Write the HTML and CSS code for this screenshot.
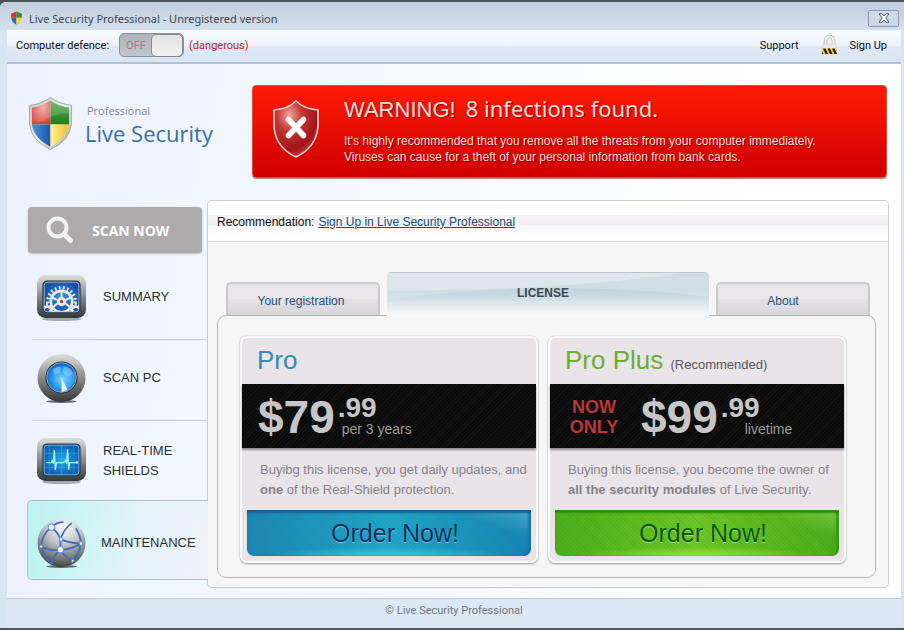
FILE: index.html
```html
<!DOCTYPE html>
<html lang="en">
<head>
<meta charset="utf-8">
<title>Live Security Professional</title>
<link rel="stylesheet" href="styles.css">
</head>
<body>
<div class="window">
  <header class="titlebar">
    <svg class="title-icon" viewBox="0 0 44 54" aria-hidden="true">
      <path fill="#d8d8d4" d="M22 1Q12 8 1 10v17q2 17 21 26 19-9 21-26V10Q32 8 22 1z"/>
      <path fill="#d3352b" d="M22 4Q13 10 4 12v14h18z"/><path fill="#2f8c2d" d="M22 4q9 6 18 8v14H22z"/>
      <path fill="#2b6ac0" d="M4 26h18v24Q6 42 4 26z"/><path fill="#f7d33c" d="M40 26H22v24q16-8 18-24z"/>
    </svg>
    <h1 class="title-text">Live Security Professional - Unregistered version</h1>
    <button class="close" type="button" aria-label="Close">
      <svg viewBox="0 0 12 10" aria-hidden="true"><path d="M1 .8h3.200L6 3 7.800.8H11L7.800 5 11 9.200H7.800L6 7 4.200 9.200H1L4.200 5z" fill="#fff" stroke="#4a5260"/></svg>
    </button>
  </header>

  <div class="toolbar">
    <label class="defence">
      <span>Computer defence:</span>
      <input class="switch-input" type="checkbox">
      <span class="switch"><span class="switch-off">OFF</span><span class="knob"></span></span>
    </label>
    <span class="danger">(dangerous)</span>
    <nav class="links">
      <a href="#support">Support</a>
      <a class="signup" href="#signup">
        <svg viewBox="0 0 17 20" aria-hidden="true">
          <path d="M4.500 11V6a4 4.500 0 0 1 8 0v5" fill="none" stroke="#b5b7ba" stroke-width="3.500"/>
          <path d="M4.500 11V6a4 4.500 0 0 1 8 0v5" fill="none" stroke="#f4f4f4" stroke-width="2.200"/>
          <path d="M2 9h13l1 10H1z" fill="#e9e9e9" stroke="#c9c9c9" stroke-width=".5"/>
          <path d="M1.500 13.500h14l.500 5.500H1z" fill="#f2cf25"/>
          <path d="M2 13.500h2.500l2.500 5.500H4.500zM6.500 13.500H9l2.500 5.500H9zM11 13.500h2.500L16 19h-2.500zM1 16l1.500 3H1z" fill="#24211a"/>
        </svg>
        Sign Up
      </a>
    </nav>
  </div>

  <main class="main">
    <div class="top">
      <div class="brand">
        <svg class="brand-shield" viewBox="0 0 46 56" aria-hidden="true">
          <defs>
            <linearGradient id="rim" x1="0" y1="0" x2="1" y2="1"><stop offset="0" stop-color="#bfc4c4"/><stop offset=".5" stop-color="#f3f3ef"/><stop offset="1" stop-color="#9da3a5"/></linearGradient>
            <radialGradient id="bred" cx=".6" cy=".3" r=".8"><stop offset="0" stop-color="#f3a198"/><stop offset="1" stop-color="#d32c28"/></radialGradient>
            <linearGradient id="bgreen" x1="0" y1="0" x2="0" y2="1"><stop offset="0" stop-color="#5fae58"/><stop offset="1" stop-color="#1c7d1d"/></linearGradient>
            <linearGradient id="bblue" x1="0" y1="0" x2="1" y2="0"><stop offset="0" stop-color="#4a90d8"/><stop offset="1" stop-color="#1d57a8"/></linearGradient>
            <linearGradient id="byellow" x1="0" y1="0" x2="1" y2="0"><stop offset="0" stop-color="#fff09a"/><stop offset="1" stop-color="#f0be2c"/></linearGradient>
          </defs>
          <path d="M23 1.500Q14 8 1.500 9.500v18Q3 46 23 54.500 43 46 44.500 27.500v-18Q32 8 23 1.500z" fill="url(#rim)" stroke="#a3a9aa"/>
          <path d="M23 4.500Q14.500 10.500 4 12v17h19z" fill="url(#bred)"/>
          <path d="M23 4.500q8.500 6 19 7.500v17H23z" fill="url(#bgreen)"/>
          <path d="M4 29h19v22.500Q6.500 44 4 29z" fill="url(#bblue)"/>
          <path d="M42 29H23v22.500Q39.500 44 42 29z" fill="url(#byellow)"/>
          <path d="M4 12q10.500-1.500 19-7.500 8.500 6 19 7.500v6Q28 17 19 24 12 28 4 28z" fill="#fff" opacity=".15"/>
        </svg>
        <div class="brand-text">
          <span class="brand-sub">Professional</span>
          <strong class="brand-name">Live Security</strong>
        </div>
      </div>

      <section class="warning">
        <svg class="warning-shield" viewBox="0 0 48 60" aria-hidden="true">
          <defs><radialGradient id="wr" cx=".35" cy=".25" r=".95"><stop offset="0" stop-color="#f2a59d"/><stop offset=".3" stop-color="#c43834"/><stop offset=".65" stop-color="#a41317"/><stop offset="1" stop-color="#ee7468"/></radialGradient></defs>
          <path d="M24 2q-8 8-22 9v17q2 21 22 30 20-9 22-30V11Q32 10 24 2z" transform="translate(1 1)" fill="#730000" opacity=".6"/>
          <path d="M24 2q-8 8-22 9v17q2 21 22 30 20-9 22-30V11Q32 10 24 2z" fill="url(#wr)" stroke="#eed6d2" stroke-width="1.600"/>
          <path d="M16.500 20.500l15 16M31.500 20.500l-15 16" stroke="#fff" stroke-width="5.500" stroke-linecap="round"/>
        </svg>
        <div>
          <h2 class="warning-title">WARNING! <span class="warning-count">8 infections found.</span></h2>
          <p class="warning-text">It's highly recommended that you remove all the threats from your computer immediately.<br>Viruses can cause for a theft of your personal information from bank cards.</p>
        </div>
      </section>
    </div>

    <div class="content">
      <nav class="sidebar">
        <button class="scan" type="button">
          <svg viewBox="0 0 28 28" aria-hidden="true"><circle cx="11.500" cy="11.500" r="9" fill="none" stroke="#f3f3f3" stroke-width="4"/><path d="M18.500 18.500l6 6" stroke="#f3f3f3" stroke-width="5" stroke-linecap="round"/></svg>
          SCAN NOW
        </button>
        <a class="item" href="#summary">
          <svg viewBox="0 0 48 48" aria-hidden="true">
            <defs>
              <linearGradient id="metal" x1="0" y1="0" x2="0" y2="1"><stop offset="0" stop-color="#dededb"/><stop offset=".45" stop-color="#929391"/><stop offset="1" stop-color="#343738"/></linearGradient>
              <radialGradient id="blue1"><stop offset="0" stop-color="#3c93e6"/><stop offset="1" stop-color="#1450a6"/></radialGradient>
              <clipPath id="screen1"><rect x="7" y="9" width="34" height="29" rx="3"/></clipPath>
            </defs>
            <ellipse cx="24" cy="45" rx="19" ry="2" fill="#54606a" opacity=".5"/>
            <rect x="0" y="2" width="48" height="42" rx="8" fill="url(#metal)"/>
            <rect x="6" y="8" width="36" height="31" rx="4" fill="url(#blue1)" stroke="#2a3948" stroke-width="1.500"/>
            <g clip-path="url(#screen1)" fill="none" stroke="#e9e7df">
              <circle cx="24" cy="28" r="13.500" stroke-width="3.500" stroke-dasharray="1.700 2.340"/>
              <circle cx="24" cy="28" r="10.500" stroke-width="2.500"/>
              <circle cx="24" cy="28" r="3" stroke-width="3"/>
              <path d="M24 25V18M21 29l-6 5M27 29l6 5M27 27l6-3M21 27l-6-3" stroke-width="2"/>
              <circle cx="10" cy="37" r="6" stroke-width="3" stroke-dasharray="2 1.770"/><circle cx="10" cy="37" r="4" stroke-width="2.500"/>
              <circle cx="38" cy="37" r="6" stroke-width="3" stroke-dasharray="2 1.770"/><circle cx="38" cy="37" r="4" stroke-width="2.500"/>
              <circle cx="24" cy="28" r="1.500" fill="#8b4a37" stroke="none"/>
            </g>
            <rect x="7" y="9" width="34" height="29" rx="3" fill="none" stroke="#d3dce6" stroke-width=".7"/>
          </svg>
          <span>SUMMARY</span>
        </a>
        <a class="item" href="#scan">
          <svg viewBox="0 0 48 48" aria-hidden="true">
            <defs><radialGradient id="blue2" cx=".5" cy=".55"><stop offset="0" stop-color="#78d4ff"/><stop offset=".6" stop-color="#2c9bef"/><stop offset="1" stop-color="#1567c4"/></radialGradient></defs>
            <ellipse cx="24" cy="46.500" rx="15" ry="1.500" fill="#26303a" opacity=".7"/>
            <circle cx="24" cy="23.500" r="23.500" fill="url(#metal)"/>
            <circle cx="24" cy="23" r="15" fill="url(#blue2)" stroke="#283640" stroke-width="1.500"/>
            <circle cx="24" cy="23" r="14.500" fill="none" stroke="#bfe4fa" stroke-width=".6"/>
            <path d="M24 23v14q3 0 6-2z" fill="#e4fbff"/>
            <path d="M24 23L30 35Q40 28 37 17z" fill="#8fe1ff" opacity=".25"/>
            <path d="M15 16q5-5 9-3l-2 5-4 2zM26 12q8 1 9 7l-5 3-5-4z" fill="#a6e6ff" opacity=".45"/>
          </svg>
          <span>SCAN PC</span>
        </a>
        <a class="item item-shields" href="#shields">
          <svg viewBox="0 0 48 48" aria-hidden="true">
            <defs><radialGradient id="blue3"><stop offset="0" stop-color="#25a8e8"/><stop offset="1" stop-color="#0e62b2"/></radialGradient></defs>
            <ellipse cx="24" cy="45" rx="19" ry="2" fill="#54606a" opacity=".5"/>
            <rect x="0" y="2" width="48" height="42" rx="8" fill="url(#metal)"/>
            <rect x="6" y="8" width="36" height="31" rx="4" fill="url(#blue3)" stroke="#1e3e5a" stroke-width="1.500"/>
            <rect x="7" y="9" width="34" height="29" rx="3" fill="none" stroke="#8fd0ee" stroke-width=".7"/>
            <path d="M7 17h34M7 31h34M12 9v29M24 9v29M36 9v29" stroke="#5cc6f0" stroke-width=".5" opacity=".6"/>
            <path d="M9 26h5l1-2 1 3 1-13 1 19 1-7h7l2-2 1 3 1-14 1 20 1-7h7" fill="none" stroke="#a5f2ff" stroke-width="1.300"/>
            <circle cx="39" cy="26" r="1.300" fill="#d6fbff"/>
          </svg>
          <span>REAL-TIME<br>SHIELDS</span>
        </a>
        <a class="item item-active" href="#maintenance" aria-current="page">
          <svg viewBox="0 0 48 48" aria-hidden="true">
            <defs><radialGradient id="globe" cx=".55" cy=".15" r=".9"><stop offset="0" stop-color="#fff"/><stop offset=".4" stop-color="#c6c7c8"/><stop offset=".75" stop-color="#77797a"/><stop offset="1" stop-color="#303234"/></radialGradient></defs>
            <ellipse cx="24" cy="46.500" rx="15" ry="1.500" fill="#26303a" opacity=".7"/>
            <circle cx="24" cy="23.500" r="23.500" fill="url(#globe)"/>
            <g fill="none" stroke="#3e6db8" stroke-width="1.700">
              <path d="M14 8Q5 15 4 27M4 27q8 5 19 3M23 30q11 0 20-6M43 24q0-7-5-15M14 8q6 4 9 12M23 20v10M14 8q5-5 12-5M34 4q-8 6-11 16M23 20q10 4 20 4M4 27q3 10 10 17M23 30q4 7 12 11M23 30q-7 6-9 14M43 24q-2 10-8 17"/>
            </g>
            <g fill="#fff" stroke="#5c91d8"><circle cx="14" cy="8" r="3"/><circle cx="23" cy="30" r="3"/><circle cx="23.500" cy="20" r="1.800"/><circle cx="43" cy="24" r="1.800"/><circle cx="4" cy="27" r="1.500"/><circle cx="35" cy="41" r="1.300"/></g>
          </svg>
          <span>MAINTENANCE</span>
        </a>
      </nav>

      <section class="panel">
        <p class="recommend">Recommendation: <a href="#signup">Sign Up in Live Security Professional</a></p>
        <div class="panel-body">
          <div class="tabs" role="tablist">
            <button class="tab" type="button" role="tab">Your registration</button>
            <button class="tab tab-active" type="button" role="tab" aria-selected="true">
              <svg class="swoosh" viewBox="0 0 320 44" preserveAspectRatio="none" aria-hidden="true"><path d="M0 0h320v24Q160 6 0 27z" fill="#fff" opacity=".2"/><path d="M0 18Q180 18 290 0H0z" fill="#fff" opacity=".28"/></svg>
              <span>LICENSE</span>
            </button>
            <button class="tab tab-about" type="button" role="tab">About</button>
          </div>
          <div class="plans" role="tabpanel">
            <article class="card">
              <h3 class="card-title pro">Pro</h3>
              <div class="price">
                <span class="amount">$79</span>
                <span class="extra"><span class="cents">.99</span><span class="term">per 3 years</span></span>
              </div>
              <p class="desc">Buyibg this license, you get daily updates, and<br><b>one</b> of the Real-Shield protection.</p>
              <button class="order order-blue" type="button">Order Now!</button>
            </article>
            <article class="card">
              <h3 class="card-title plus">Pro Plus <small>(Recommended)</small></h3>
              <div class="price">
                <span class="only">NOW<br>ONLY</span>
                <span class="amount">$99</span>
                <span class="extra"><span class="cents">.99</span><span class="term term-life">livetime</span></span>
              </div>
              <p class="desc">Buying this license, you become the owner of<br><b>all the security modules</b> of Live Security.</p>
              <button class="order order-green" type="button">Order Now!</button>
            </article>
          </div>
        </div>
      </section>
    </div>
  </main>

  <footer class="footer">© Live Security Professional</footer>
</div>
</body>
</html>
```

FILE: styles.css
```css
* { box-sizing: border-box; }

body {
  margin: 0;
  background: #50545c;
  font-family: "Liberation Sans", Arial, sans-serif;
  font-size: 12px;
  color: #111;
}

h1, h2, h3, p { margin: 0; font-weight: normal; }
a { color: inherit; text-decoration: none; }
button { font-family: inherit; cursor: pointer; }
svg { display: block; flex: none; }

.window {
  display: flex;
  flex-direction: column;
  min-height: 100vh;
  padding: 0 3px 0 7px;
  border-top: 2px solid #50545c;
  border-bottom: 2px solid #50545c;
  border-radius: 7px 0 0 0;
  background: #d7e6f3;
}

/* Title bar and toolbar */
.titlebar {
  display: flex;
  align-items: center;
  gap: 6px;
  height: 28px;
  margin: 0 -3px 0 -7px;
  padding: 4px 5px 0 10px;
  border-radius: 6px 0 0 0;
  background: linear-gradient(#c0cddd, #d4e0ee);
}
.title-icon { width: 13px; height: 16px; }
.title-text {
  flex: 1;
  font-family: "Noto Sans", sans-serif;
  font-size: 11px;
  color: #3d4654;
}
.close {
  display: grid;
  place-items: center;
  width: 31px;
  height: 17px;
  padding: 0;
  border: 1px solid #8695b1;
  border-radius: 2px;
  background: #cfdae8;
}
.close svg { width: 12px; height: 10px; }

.toolbar {
  display: flex;
  align-items: center;
  gap: 5px;
  height: 34px;
  padding: 0 14px 2px 9px;
  border-bottom: 2px solid #afbfd6;
  background: linear-gradient(#f8faff 0, #edf2fb 50%, #dfe8f5 52%, #d9e4f4 100%);
  font-family: Roboto, sans-serif;
  font-size: 11px;
}
.defence { display: flex; align-items: center; gap: 10px; }
.switch-input { position: absolute; opacity: 0; width: 1px; height: 1px; }
.switch {
  display: flex;
  justify-content: space-between;
  align-items: center;
  width: 65px;
  height: 24px;
  border: 1px solid #8c9197;
  border-radius: 5px;
  background: linear-gradient(#aeb2ba, #c3c6cc);
}
.switch-off { padding-left: 6px; color: #a87b82; }
.knob {
  width: 32px;
  height: 23px;
  border: 1px solid #85888c;
  border-radius: 5px;
  background: linear-gradient(#e2e2e2, #f1f1f1);
}
.danger { color: #d3131f; }
.links { display: flex; align-items: center; gap: 22px; margin-left: auto; }
.signup { display: flex; align-items: center; gap: 12px; }
.signup svg { width: 17px; height: 20px; }

/* Main area */
.main {
  flex: 1;
  padding: 21px 12px 10px 21px;
  background:
    linear-gradient(105deg, transparent 15%, #eff8ff 28%, transparent 38%),
    linear-gradient(90deg, #edf2fe, #f7f9ff 50%, #fff 85%);
}
.top { display: flex; margin-bottom: 22px; }
.brand {
  display: flex;
  gap: 12px;
  width: 224px;
  flex: none;
  padding-top: 11px;
}
.brand-shield { width: 45px; height: 55px; }
.brand-text { display: flex; flex-direction: column; font-family: "Open Sans", sans-serif; padding-top: 7px; }
.brand-sub { padding-left: 2px; font-size: 11px; line-height: 16px; color: #85898e; }
.brand-name { font-size: 22px; line-height: 28px; font-weight: normal; color: #3670ab; }

.warning {
  flex: 1;
  display: flex;
  gap: 24px;
  min-height: 93px;
  margin-right: 2px;
  padding: 8px 19px;
  border: 1px solid #d84a42;
  border-radius: 4px;
  background: linear-gradient(#ff1a05, #cf0000);
  box-shadow: 0 1px 1px #a88;
  color: #ffdedb;
}
.warning-shield { width: 48px; height: 60px; margin-top: 5px; }
.warning-title { font-size: 22px; line-height: 28px; text-shadow: 1px 1px 1px #900; }
.warning-count { margin-left: 4px; font-family: "Noto Sans", sans-serif; }
.warning-text { margin-top: 9px; font-size: 12px; line-height: 16px; text-shadow: 1px 1px 1px #700; }

.content { display: flex; align-items: stretch; }

/* Sidebar */
.sidebar { width: 179px; flex: none; padding-top: 7px; }
.scan {
  display: flex;
  align-items: center;
  gap: 18px;
  width: 174px;
  height: 46px;
  margin-bottom: 6px;
  padding: 0 0 0 18px;
  border: 0;
  border-radius: 4px;
  background: #acaaab;
  box-shadow: 0 1px 2px #bbb;
  color: #fff;
  font-family: "Open Sans", sans-serif;
  font-size: 14px;
  font-weight: bold;
}
.scan svg { width: 28px; height: 28px; }
.item {
  display: flex;
  align-items: center;
  gap: 17px;
  height: 81px;
  margin-left: 4px;
  padding: 0 0 4px 5px;
  border-bottom: 1px solid #c4ccd8;
  color: #2b2e33;
  font-size: 13px;
  line-height: 20px;
}
.item svg { width: 49px; height: 49px; }
.item-shields { height: 79px; padding-bottom: 0; border-bottom: 0; }
.item-active {
  position: relative;
  height: 80px;
  margin: 0 -1px 0 -1px;
  padding: 6px 0 0 9px;
  gap: 15px;
  border: 1px solid #abc1c8;
  border-right: 0;
  border-radius: 5px 0 0 5px;
  background: linear-gradient(100deg, #bdf2f3, #cdf4f5 30%, #e4f3f7 60%, #eff1f7);
}

/* Content panel */
.panel {
  flex: 1;
  min-width: 0;
  border: 1px solid #c8ccd2;
  border-radius: 5px;
  background: #f6f6f6;
}
.recommend {
  display: flex;
  gap: 4px;
  align-items: center;
  height: 41px;
  padding: 2px 9px 0;
  border-bottom: 1px solid #d5d5d8;
  border-radius: 5px 5px 0 0;
  background: linear-gradient(#fff 0 35%, #f6f5f7 36%, #efedf0 58%, #faf9fb 64%, #fff);
  font-size: 12px;
}
.recommend a { color: #1c4f80; text-decoration: underline; }
.panel-body { padding: 30px 12px 9px 9px; }

.tabs {
  position: relative;
  display: grid;
  grid-template-columns: 154fr 322fr 154fr;
  align-items: end;
  gap: 7px;
  margin: 0 6px -1px 9px;
}
.tab {
  height: 34px;
  padding: 2px 4px 0 0;
  border: 2px solid #c9c9cb;
  border-bottom: 1px solid #b3b3b6;
  border-radius: 5px 5px 0 0;
  background: linear-gradient(#e9e7e9 0 48%, #e2e0e2 50%, #d8d6d8);
  font-size: 12px;
  color: #23527f;
}
.tab-about { padding-right: 20px; }
.tab-active {
  position: relative;
  height: 44px;
  padding: 0 10px 4px 0;
  border: 0;
  border-top: 1px solid #b9c7d0;
  background: linear-gradient(#c8d6df 0, #c3d5df 45%, #f6f6f6 95%);
  color: #44484f;
  font-weight: bold;
}
.tab-active span { position: relative; }
.swoosh { position: absolute; inset: 0; width: 100%; height: 100%; }

.plans {
  display: grid;
  grid-template-columns: 1fr 1fr;
  gap: 10px;
  padding: 20px 29px 14px 22px;
  border: 1px solid #b9b9bb;
  border-radius: 9px;
}
.card {
  display: flex;
  flex-direction: column;
  min-width: 0;
  border: 2px solid #fbfbfb;
  border-radius: 7px;
  background: #e8e4e8;
  box-shadow: 0 0 1px #b4b2b5, 0 1px 2px #999;
}
.card-title { height: 46px; padding-left: 15px; font-size: 26px; line-height: 44px; }
.card-title small { font-size: 13px; color: #57575b; }
.pro { color: #358cae; }
.plus { color: #6aaf35; }

.price {
  display: flex;
  height: 64px;
  padding-left: 16px;
  background: repeating-linear-gradient(135deg, #0a0b0a 0 2px, #121312 2px 3px);
  box-shadow: 0 2px 2px #8e8b8f;
  color: #c6c6c6;
}
.only {
  width: 56px;
  margin-right: 19px;
  padding-top: 13px;
  color: #bd3637;
  font-size: 18px;
  line-height: 20px;
  font-weight: bold;
  text-align: center;
}
.amount { font-size: 46px; line-height: 66px; font-weight: bold; }
.extra { display: flex; flex-direction: column; padding: 11px 0 0 3px; }
.cents { font-size: 28px; line-height: 26px; font-weight: bold; }
.term { padding-left: 4px; font-size: 14px; line-height: 16px; color: #9b9b9b; }
.term-life { padding-left: 24px; }

.desc {
  padding: 12px 0 0 18px;
  font-size: 13px;
  line-height: 20px;
  white-space: nowrap;
  color: #85828a;
}
.order {
  height: 46px;
  margin: 10px 5px 5px;
  padding: 0 0 0 12px;
  border: 0;
  border-radius: 0 0 7px 7px;
  font-size: 25px;
  line-height: 44px;
}
.order-blue {
  background:
    radial-gradient(ellipse 42% 20% at 50% 100%, #35cbe3, transparent),
    linear-gradient(20deg, transparent 80%, #62bdd680 95%),
    repeating-linear-gradient(45deg, #0000 0 2px, #0571941c 2px 3px),
    linear-gradient(90deg, #1c86b2, #21a6c6 50%, #1883b1);
  box-shadow: inset 0 3px 2px #17608f, inset -3px 0 2px #1676a4;
  color: #07315f;
  text-shadow: 0 1px 1px #67c8df;
}
.order-green {
  background:
    radial-gradient(ellipse 42% 20% at 50% 100%, #9ae43a, transparent),
    linear-gradient(20deg, transparent 80%, #92d96080 95%),
    repeating-linear-gradient(45deg, #0000 0 2px, #2b7d0020 2px 3px),
    linear-gradient(90deg, #4cae1b, #6dc526 50%, #4cac19);
  box-shadow: inset 0 3px 2px #2d8d10, inset -3px 0 2px #3c9b12;
  color: #075a08;
  text-shadow: 0 1px 1px #a2e070;
}

.footer {
  height: 30px;
  border-top: 1px solid #bccbdc;
  background: #dce8f6;
  color: #707780;
  font-family: Roboto, sans-serif;
  font-size: 11px;
  line-height: 24px;
  text-align: center;
}
```
